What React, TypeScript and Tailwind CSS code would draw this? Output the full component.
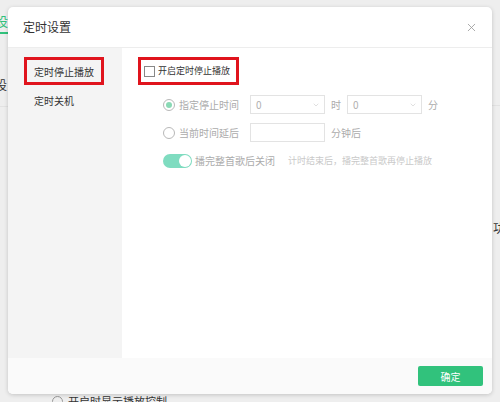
import { X, ChevronDown } from 'lucide-react';

const font = { fontFamily: '"Noto Sans CJK SC", "Noto Sans", sans-serif' };

function Radio({ checked }: { checked?: boolean }) {
  return (
    <span className="w-[12px] h-[12px] rounded-full border border-[#b8b8b8] flex items-center justify-center bg-white shrink-0">
      {checked && <span className="w-[6px] h-[6px] rounded-full bg-[#8ad9b5]" />}
    </span>
  );
}

function Select({ value }: { value: string }) {
  return (
    <div className="w-[75px] h-[19px] border border-[#e3e3e3] bg-white flex items-center justify-between pl-[5px] pr-[4px] text-[10px] text-[#b0b0b0]">
      <span>{value}</span>
      <ChevronDown className="w-[8px] h-[8px] text-[#d0d0d0]" strokeWidth={2} />
    </div>
  );
}

export default function App() {
  return (
    <div className="relative w-[500px] h-[402px] overflow-hidden bg-[#eeeeee] whitespace-nowrap" style={font}>
      {/* page behind the modal */}
      <div className="absolute left-[-5px] top-[14px] text-[13px] text-[#31c27c] leading-none">设</div>
      <div className="absolute left-0 top-[32px] w-[8px] h-[2px] bg-[#31c27c]" />
      <div className="absolute left-[-5px] top-[79px] text-[12px] text-[#333] leading-none">设</div>
      <div className="absolute left-0 top-[106px] w-[8px] h-px bg-[#e2e2e2]" />
      <div className="absolute left-[493px] top-[222px] text-[12px] text-[#333] leading-none">功</div>
      <div className="absolute right-0 top-[105px] w-[8px] h-px bg-[#e2e2e2]" />
      <div className="absolute left-[52px] top-[396px] flex items-center gap-[5px] text-[11px] text-[#333] leading-none">
        <span className="w-[11px] h-[11px] rounded-full border border-[#999]" />
        <span>开启时显示播放控制</span>
      </div>

      {/* modal */}
      <div className="absolute left-[8px] top-[7px] w-[484px] h-[387px] bg-white rounded-[5px] shadow-[0_1px_4px_rgba(0,0,0,0.18)] flex flex-col overflow-hidden">
        <div className="h-[41px] shrink-0 flex items-center justify-between pl-[15px] pr-[14px] border-b border-[#ededed]">
          <span className="text-[12px] text-[#333]">定时设置</span>
          <X className="w-[13px] h-[13px] text-[#999]" strokeWidth={1.5} />
        </div>

        <div className="flex-1 flex min-h-0">
          <div className="w-[114px] bg-[#f4f4f4] pt-[9px] pl-[16px] flex flex-col gap-[4px]">
            <div className="w-[80px] h-[28px] border-[3px] border-[#e0141d] flex items-center pl-[7px] text-[10px] text-[#333]">
              定时停止播放
            </div>
            <div className="h-[22px] flex items-center pl-[10px] text-[10px] text-[#333]">定时关机</div>
          </div>

          <div className="flex-1 pt-[9px] pl-[16px]">
            <div className="w-[101px] h-[28px] border-[3px] border-[#e0141d] flex items-center pl-[3px] gap-[3px] text-[9px] text-[#333]">
              <span className="w-[11px] h-[11px] border border-[#888] bg-white shrink-0" />
              <span>开启定时停止播放</span>
            </div>

            <div className="pl-[25px] pt-[10px] flex flex-col gap-[9px] text-[10px] text-[#ababab]">
              <div className="flex items-center h-[19px]">
                <Radio checked />
                <span className="ml-[4px] w-[71px]">指定停止时间</span>
                <Select value="0" />
                <span className="mx-[6px]">时</span>
                <Select value="0" />
                <span className="ml-[6px]">分</span>
              </div>
              <div className="flex items-center h-[19px]">
                <Radio />
                <span className="ml-[4px] w-[71px]">当前时间延后</span>
                <div className="w-[75px] h-[19px] border border-[#e3e3e3] bg-white" />
                <span className="ml-[6px]">分钟后</span>
              </div>
              <div className="flex items-center h-[19px]">
                <span className="w-[29px] h-[14px] rounded-full bg-[#7fdcc0] flex items-center justify-end pr-px shrink-0">
                  <span className="w-[12px] h-[12px] rounded-full bg-white" />
                </span>
                <span className="ml-[3px]">播完整首歌后关闭</span>
                <span className="ml-[13px] text-[9px] text-[#c9c9c9]">计时结束后，播完整首歌再停止播放</span>
              </div>
            </div>
          </div>
        </div>

        <div className="h-[36px] shrink-0 bg-[#fafafa] flex items-center justify-end pr-[9px]">
          <button className="w-[65px] h-[20px] bg-[#31c27c] rounded-[2px] text-white text-[10px] flex items-center justify-center">
            确定
          </button>
        </div>
      </div>
    </div>
  );
}
